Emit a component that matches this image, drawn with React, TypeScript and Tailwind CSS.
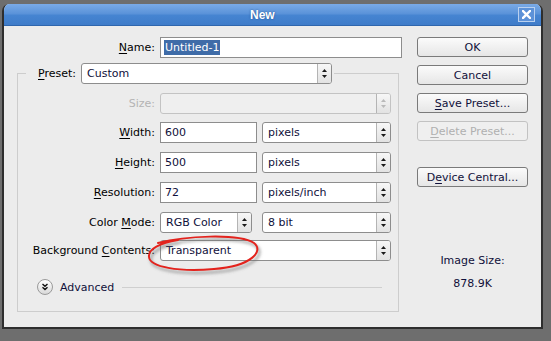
import type { ReactNode } from "react";

const font = { fontFamily: '"DejaVu Sans", Tahoma, sans-serif' };

function Mn({ children }: { children: ReactNode }) {
  return <span className="underline underline-offset-[2px] decoration-[1px]">{children}</span>;
}

function Stepper({ disabled }: { disabled?: boolean }) {
  const c = disabled ? "#b9b9b9" : "#1a1a1a";
  return (
    <div className="w-[14px] h-full border-l border-[#b4b4b4] bg-[linear-gradient(to_bottom,#f7f7f7,#e2e2e2)] rounded-r-[2px] flex items-center justify-center">
      <svg width="7" height="11" viewBox="0 0 7 11">
        <path d="M3.5 1 L6 4 L1 4 Z" fill={c} />
        <path d="M1 7 L6 7 L3.5 10 Z" fill={c} />
      </svg>
    </div>
  );
}

function Select({ value, w, disabled }: { value: string; w: string; disabled?: boolean }) {
  return (
    <div
      className={`${w} h-[21px] rounded-[3px] border flex items-stretch ${
        disabled ? "border-[#c3c3c3] bg-[#efefef]" : "border-[#8d8d8d] bg-white"
      }`}
    >
      <div className="flex-1 flex items-center pl-[5px] text-[#10103a] leading-none">{value}</div>
      <Stepper disabled={disabled} />
    </div>
  );
}

function TextBox({ value, w }: { value: string; w: string }) {
  return (
    <div className={`${w} h-[21px] border border-[#8d8d8d] bg-white flex items-center pl-[4px] text-[#10103a] leading-none`}>
      {value}
    </div>
  );
}

function Row({ label, children, mt, muted }: { label: ReactNode; children: ReactNode; mt: string; muted?: boolean }) {
  return (
    <div className={`flex items-center ${mt}`}>
      <div className={`w-[137px] text-right leading-none ${muted ? "text-[#b4b4b4]" : "text-black"}`}>{label}</div>
      <div className="ml-[5px] flex items-center">{children}</div>
    </div>
  );
}

function Btn({ children, mt, disabled }: { children: ReactNode; mt: string; disabled?: boolean }) {
  return (
    <div
      className={`${mt} w-[111px] h-[20px] rounded-[3px] border flex items-center justify-center leading-none ${
        disabled
          ? "border-[#c2c2c2] text-[#b0b0b0] bg-[#efefef]"
          : "border-[#7a7a7a] text-[#10103a] bg-[linear-gradient(to_bottom,#fbfbfb,#e6e6e6)]"
      }`}
    >
      {children}
    </div>
  );
}

export default function App() {
  return (
    <div className="relative w-[551px] h-[341px] bg-[#6e6e6e] pt-[4px] pl-[2px] overflow-hidden text-[11px]" style={font}>
      <div className="w-[541px] h-[325px] bg-[#ececec] border-x-2 border-b-2 border-[#2e2e2e] rounded-t-[7px] overflow-hidden flex flex-col">
        {/* Title bar */}
        <div className="h-[22px] flex items-center bg-[linear-gradient(to_bottom,#7aaae6_0%,#5b93d9_45%,#4584d1_55%,#3f7cc9_100%)] border-b border-[#2f66ad]">
          <span
            className="ml-[246px] text-white font-bold text-[12px] leading-none [text-shadow:0_0_2px_#1f4f8f]"
            style={{ fontFamily: '"Liberation Sans", Arial, sans-serif' }}
          >
            New
          </span>
          <div className="flex-1" />
          <div className="mr-[6px] w-[17px] h-[15px] border border-[#b9d0ef] bg-[#5d92d8] flex items-center justify-center">
            <svg width="9" height="9" viewBox="0 0 9 9">
              <path d="M1 1 L8 8 M8 1 L1 8" stroke="white" strokeWidth="2.4" strokeLinecap="square" />
            </svg>
          </div>
        </div>

        {/* Body */}
        <div className="flex flex-1">
          <div className="w-[405px]">
            <div className="flex items-center mt-[11px]">
              <div className="w-[151px] text-right leading-none">
                <Mn>N</Mn>ame:
              </div>
              <div className="ml-[5px] w-[242px] h-[21px] border border-[#8d8d8d] bg-white flex items-center pl-[3px] leading-none">
                <span className="bg-[#3f6ca8] text-white px-[1px] py-[2px]">Untitled-1</span>
              </div>
            </div>

            <fieldset className="mt-[5px] ml-[13px] w-[382px] border border-[#cdcdcd] pb-[16px]">
              <legend className="ml-[8px] pl-[12px] pr-[2px]">
                <div className="flex items-center">
                  <span className="leading-none">
                    <Mn>P</Mn>reset:
                  </span>
                  <div className="ml-[5px]">
                    <Select value="Custom" w="w-[251px]" />
                  </div>
                </div>
              </legend>

              <Row label="Size:" mt="mt-[9px]" muted>
                <Select value="" w="w-[231px]" disabled />
              </Row>
              <Row label={<><Mn>W</Mn>idth:</>} mt="mt-[8px]">
                <TextBox value="600" w="w-[97px]" />
                <div className="ml-[5px]"><Select value="pixels" w="w-[129px]" /></div>
              </Row>
              <Row label={<><Mn>H</Mn>eight:</>} mt="mt-[9px]">
                <TextBox value="500" w="w-[97px]" />
                <div className="ml-[5px]"><Select value="pixels" w="w-[129px]" /></div>
              </Row>
              <Row label={<><Mn>R</Mn>esolution:</>} mt="mt-[9px]">
                <TextBox value="72" w="w-[97px]" />
                <div className="ml-[5px]"><Select value="pixels/inch" w="w-[129px]" /></div>
              </Row>
              <Row label={<>Color <Mn>M</Mn>ode:</>} mt="mt-[9px]">
                <Select value="RGB Color" w="w-[92px]" />
                <div className="ml-[10px]"><Select value="8 bit" w="w-[129px]" /></div>
              </Row>
              <Row label={<>Background <Mn>C</Mn>ontents:</>} mt="mt-[7px]">
                <Select value="Transparent" w="w-[231px]" />
              </Row>

              <div className="mt-[18px] pl-[19px] flex items-center h-[16px]">
                <div className="w-[16px] h-[16px] rounded-full border border-[#9a9a9a] bg-[linear-gradient(to_bottom,#ffffff,#d9d9d9)] flex items-center justify-center">
                  <svg width="8" height="8" viewBox="0 0 8 8">
                    <path d="M1.5 1 L4 3.3 L6.5 1 M1.5 4.3 L4 6.6 L6.5 4.3" stroke="#111" strokeWidth="1.4" fill="none" />
                  </svg>
                </div>
                <span className="ml-[7px] leading-none text-[#10103a]">Advanced</span>
                <div className="ml-[8px] mr-[16px] flex-1 h-px bg-[#cfcfcf]" />
              </div>
            </fieldset>
          </div>

          <div className="pl-[8px] flex flex-col">
            <Btn mt="mt-[11px]">OK</Btn>
            <Btn mt="mt-[8px]">Cancel</Btn>
            <Btn mt="mt-[8px]"><Mn>S</Mn>ave Preset...</Btn>
            <Btn mt="mt-[8px]" disabled><Mn>D</Mn>elete Preset...</Btn>
            <Btn mt="mt-[26px]">D<Mn>e</Mn>vice Central...</Btn>
            <div className="mt-[67px] w-[111px] text-center leading-[14px] text-[#10103a]">Image Size:</div>
            <div className="mt-[9px] w-[111px] text-center leading-[14px] text-[#10103a]">878.9K</div>
          </div>
        </div>
      </div>

      {/* red annotation ring */}
      <svg className="absolute left-0 top-0 pointer-events-none" width="551" height="341" viewBox="0 0 551 341">
        <defs>
          <filter id="sh" x="-20%" y="-20%" width="140%" height="140%">
            <feGaussianBlur stdDeviation="1.6" />
          </filter>
        </defs>
        <path
          d="M158 243 C185 236, 238 233, 254 243 C264 251, 252 266, 214 269 C178 272, 150 267, 149 257 C148 249, 160 243, 178 240"
          stroke="#6a6a6a"
          strokeOpacity="0.55"
          strokeWidth="2.5"
          fill="none"
          transform="translate(2 3)"
          filter="url(#sh)"
        />
        <path
          d="M158 243 C185 236, 238 233, 254 243 C264 251, 252 266, 214 269 C178 272, 150 267, 149 257 C148 249, 160 243, 178 240"
          stroke="#e3231d"
          strokeWidth="2"
          fill="none"
          strokeLinecap="round"
        />
      </svg>
    </div>
  );
}
